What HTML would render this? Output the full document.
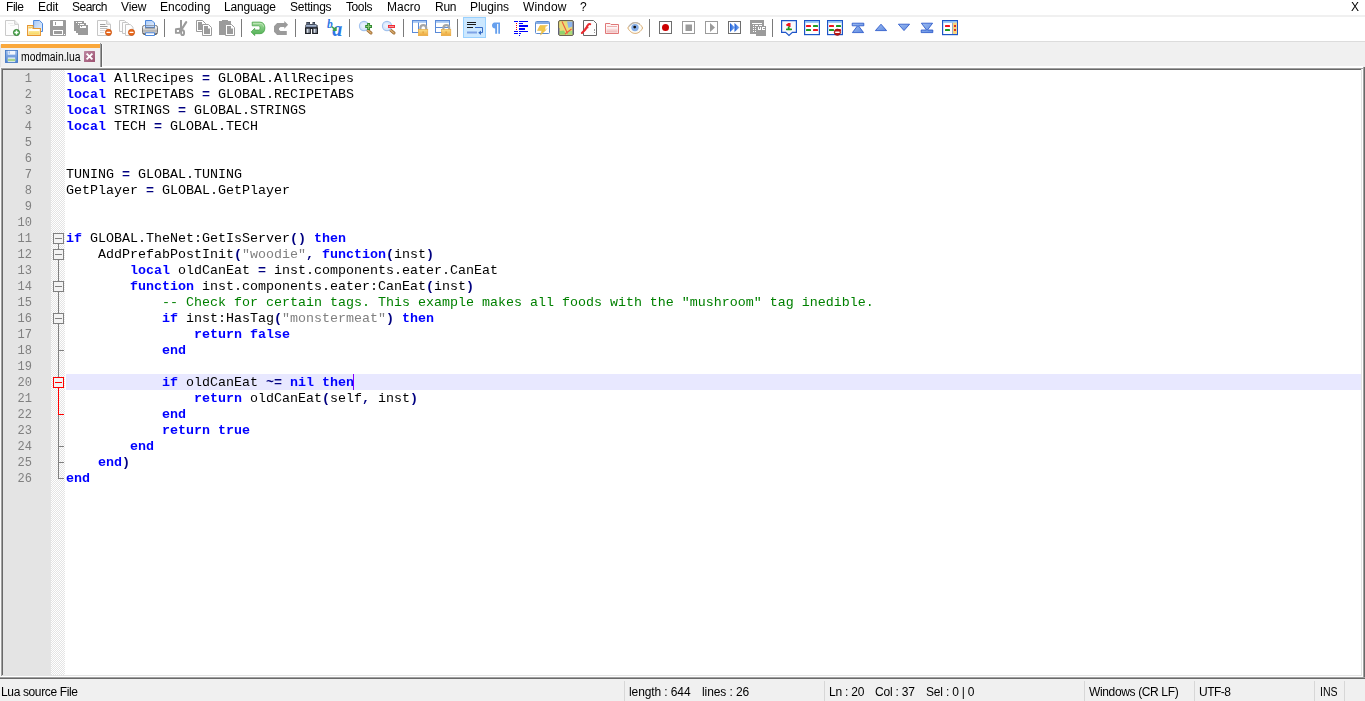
<!DOCTYPE html>
<html lang="en">
<head>
<meta charset="utf-8">
<title>modmain.lua - Notepad++</title>
<style>
*{box-sizing:border-box;margin:0;padding:0}
html,body{width:1365px;height:701px;overflow:hidden;background:#f0f0f0}
body{position:relative;font-family:"Liberation Sans",sans-serif;font-size:12px;color:#000}
.abs{position:absolute}
#menu{position:absolute;left:0;top:0;width:1365px;height:15px;background:#fff;will-change:transform}
#menu span{position:absolute;top:0;height:14px;line-height:14px;white-space:pre}
#mline{position:absolute;left:0;top:15px;width:1365px;height:2px;background:#f0f0f0}
#tb{position:absolute;left:0;top:17px;width:1365px;height:24px;background:#fff}
#tb .ic{position:absolute;top:3px;overflow:visible}
#tb .sep{position:absolute;top:2px;width:1px;height:18px;background:#7a7a7a}
#tb .act{position:absolute;top:0;width:23px;height:21px;background:#cce8ff;border:1px solid #99d1ff}
#tbline{position:absolute;left:0;top:41px;width:1365px;height:1px;background:#dcdcdc}
#tab{position:absolute;left:0;top:42px;width:103px;height:25px;will-change:transform}
#tab .lb{position:absolute;left:0;top:3px;width:1px;height:22px;background:#e4e4e4}
#tab .hi{position:absolute;left:0;top:0;width:100px;height:2px;background:#fff}
#tab .or{position:absolute;left:1px;top:2px;width:99px;height:4px;background:#faa83c}
#tab .rb{position:absolute;left:100px;top:1px;width:1px;height:24px;background:#a0a0a0}
#tab .rb2{position:absolute;left:101px;top:2px;width:1px;height:23px;background:#696969}
#tab .rb3{position:absolute;left:102px;top:2px;width:1px;height:22px;background:#fafafa}
#tabline{position:absolute;left:102px;top:66px;width:1261px;height:1px;background:#fff}
#tab .tx{position:absolute;left:21px;top:8px;font-size:12px;line-height:14px;white-space:pre;transform:scaleX(.865);transform-origin:0 0}
#tab .cl{position:absolute;left:84px;top:9px;width:11px;height:11px}
#tab .ti{position:absolute;left:5px;top:8px}
#ed{position:absolute;left:0;top:67px;width:1365px;height:612px;background:#fff}
#ed .b{position:absolute}
#num{position:absolute;left:3px;top:70px;width:48px;height:605px;background:#e4e4e4;overflow:hidden;padding-top:1px;
 font-family:"Liberation Mono",monospace;font-size:12px;line-height:16px;color:#808080;text-align:right;padding-right:19px;will-change:transform}
#fold{position:absolute;left:51px;top:70px;width:14px;height:605px;overflow:hidden;
 background-color:#fff;
 background-image:linear-gradient(45deg,#e4e4e4 25%,transparent 25%,transparent 75%,#e4e4e4 75%),linear-gradient(45deg,#e4e4e4 25%,transparent 25%,transparent 75%,#e4e4e4 75%);
 background-size:2px 2px;background-position:1px 0,0 1px}
#fold .foldsvg{position:absolute;left:0;top:0}
#code{position:absolute;left:64px;top:71px;width:1297px;height:604px;overflow:hidden;
 font-family:"Liberation Mono",monospace;font-size:13.333px;line-height:16px;color:#000;will-change:transform}
#code .ln{height:16px;padding-left:2px;margin-left:0;white-space:pre}
#hl{position:absolute;left:66px;top:374px;width:1295px;height:16px;background:#e8e8ff}
#code .k{color:#0000ff;font-weight:bold}
#code .o{color:#000080;font-weight:bold}
#code .s{color:#808080}
#code .c{color:#008000}
#caret{position:absolute;left:353px;top:374px;width:1px;height:16px;background:#8000ff}
#sb{position:absolute;left:0;top:679px;width:1365px;height:22px;background:#f0f0f0;will-change:transform}
#sb span{position:absolute;top:6px;height:14px;line-height:14px;white-space:pre}
#sb i{position:absolute;top:2px;width:1px;height:20px;background:#d7d7d7}
</style>
</head>
<body>
<svg width="0" height="0" style="position:absolute"><defs><linearGradient id="gBluePage" x1="0" y1="0" x2="1" y2="1"><stop offset="0" stop-color="#a9c9f6"/><stop offset="1" stop-color="#e6f0fd"/></linearGradient><linearGradient id="gFolder" x1="0" y1="0" x2="0" y2="1"><stop offset="0" stop-color="#fbe89a"/><stop offset="1" stop-color="#f8d65a"/></linearGradient><linearGradient id="gPrinter" x1="0" y1="0" x2="0" y2="1"><stop offset="0" stop-color="#fbfbfb"/><stop offset=".35" stop-color="#e4e4e4"/><stop offset=".6" stop-color="#b4b4b4"/><stop offset="1" stop-color="#d2d2d2"/></linearGradient><linearGradient id="gGreen" x1="0" y1="0" x2="0" y2="1"><stop offset="0" stop-color="#a6dba0"/><stop offset="1" stop-color="#4caf50"/></linearGradient><linearGradient id="gLock" x1="0" y1="0" x2="0" y2="1"><stop offset="0" stop-color="#fbe08a"/><stop offset="1" stop-color="#eda63a"/></linearGradient><linearGradient id="gPink" x1="0" y1="0" x2="0" y2="1"><stop offset="0" stop-color="#fbe6e6"/><stop offset="1" stop-color="#eeb4b4"/></linearGradient><linearGradient id="gBlueTri" x1="0" y1="0" x2="1" y2="0"><stop offset="0" stop-color="#1c5fd8"/><stop offset="1" stop-color="#8fb6f2"/></linearGradient><linearGradient id="gTabSave" x1="0" y1="0" x2="0" y2="1"><stop offset="0" stop-color="#9cbcec"/><stop offset="1" stop-color="#4d82d2"/></linearGradient><linearGradient id="gArrow" x1="0" y1="0" x2="1" y2="1"><stop offset="0" stop-color="#9dbcf0"/><stop offset="1" stop-color="#5f8ae0"/></linearGradient><linearGradient id="gClose" x1="0" y1="0" x2="1" y2="1"><stop offset="0" stop-color="#bd88a2"/><stop offset="1" stop-color="#9c506f"/></linearGradient></defs></svg>
<div id="menu">
<span style="left:6px;letter-spacing:-0.45px">File</span>
<span style="left:38px;letter-spacing:-0.1px">Edit</span>
<span style="left:72px;letter-spacing:-0.5px">Search</span>
<span style="left:121px;letter-spacing:-0.1px">View</span>
<span style="left:160px;letter-spacing:0.05px">Encoding</span>
<span style="left:224px;letter-spacing:-0.2px">Language</span>
<span style="left:290px;letter-spacing:-0.25px">Settings</span>
<span style="left:346px;letter-spacing:-0.4px">Tools</span>
<span style="left:387px;letter-spacing:0px">Macro</span>
<span style="left:435px;letter-spacing:-0.25px">Run</span>
<span style="left:470px;letter-spacing:-0.05px">Plugins</span>
<span style="left:523px;letter-spacing:0.15px">Window</span>
<span style="left:580px;letter-spacing:0px">?</span>
<span style="left:1351px;letter-spacing:0px">X</span>
</div>
<div id="mline"></div>
<div id="tb"><svg class="ic" style="left:4px" width="16" height="16" viewBox="0 0 16 16"><path d="M1.5 .5H10.7L14.5 4.3V15.5H1.5Z" fill="#fdfdfd" stroke="#cacaca"/><path d="M10.7 .5V4.3H14.5" fill="#efefef" stroke="#cacaca"/><path d="M4 3.5H9M6 5.5H11" stroke="#ededed"/><circle cx="12.5" cy="12.5" r="3.05" fill="#4caf50" stroke="#2c7a2c" stroke-width=".9"/><path d="M10.5 12.5H14.5M12.5 10.5V14.5" stroke="#fff" stroke-width="1.4"/></svg><svg class="ic" style="left:27px" width="16" height="16" viewBox="0 0 16 16"><path d="M6.6 .5H12.6L15.5 3.4V11.5H6.6Z" fill="url(#gBluePage)" stroke="#4d88dc"/><path d="M.6 5.5H6V8.5H13.4V15.4H.6Z" fill="#fffef6" stroke="#e6952e" stroke-width="1.1"/><path d="M1.4 6.4H5.6V7.6L4 8.6H1.4Z" fill="#f6cc5a"/><path d="M1.5 11H12.6V14.6H1.5Z" fill="url(#gFolder)"/></svg><svg class="ic" style="left:50px" width="16" height="16" viewBox="0 0 16 16"><rect x="0" y="0" width="16" height="16" rx=".8" fill="#9b9b9b"/><rect x="3" y="1" width="10" height="5" fill="#fff"/><rect x="5" y="2" width="1" height="3" fill="#9b9b9b"/><rect x="3" y="10" width="10" height="5" fill="#fff"/><rect x="4" y="11" width="8" height="3" fill="#9b9b9b"/><rect x="14" y="14" width="1" height="1" fill="#fff"/></svg><svg class="ic" style="left:73px" width="16" height="16" viewBox="0 0 16 16"><rect x="1" y="1" width="10" height="10" fill="#9b9b9b"/><rect x="3" y="2" width="6" height="2" fill="#fff"/><rect x="4" y="2" width="1" height="1" fill="#9b9b9b"/><rect x="3" y="3" width="10" height="1" fill="#fff" opacity=".0"/><rect x="3" y="3" width="10" height="10" fill="#9b9b9b"/><rect x="5" y="4" width="6" height="2" fill="#fff"/><rect x="6" y="4" width="1" height="1" fill="#9b9b9b"/><rect x="5" y="5" width="10" height="10" fill="#9b9b9b"/><rect x="7" y="6" width="6" height="2" fill="#fff"/><rect x="8" y="6" width="1" height="1" fill="#9b9b9b"/></svg><svg class="ic" style="left:96px" width="16" height="16" viewBox="0 0 16 16"><path d="M1.5 .5H10.7L14.5 4.3V15.5H1.5Z" fill="#fdfdfd" stroke="#c6c6c6"/><path d="M10.7 .5V4.3H14.5" fill="#f0f0f0" stroke="#c6c6c6"/><path d="M4 4.5H9.5M4 6.5H11.5" stroke="#9c9c9c"/><path d="M4 8.5H11.5" stroke="#bdbdbd"/><path d="M4 10.5H9M4 12.5H8" stroke="#d6d6d6"/><circle cx="12.5" cy="12.4" r="3.05" fill="#ea6a1e" stroke="#c8520e" stroke-width=".8"/><rect x="10.5" y="11.7" width="4" height="1.4" rx=".3" fill="#fff"/></svg><svg class="ic" style="left:119px" width="16" height="16" viewBox="0 0 16 16"><path d="M0.5 0.5H5.3L8 3.2V11.5H0.5Z" fill="#fdfdfd" stroke="#c6c6c6"/><path d="M3.5 2.5H8.3L11 5.2V13.5H3.5Z" fill="#fdfdfd" stroke="#c6c6c6"/><path d="M6.5 4.5H11.3L14 7.2V15.5H6.5Z" fill="#fdfdfd" stroke="#c6c6c6"/><circle cx="12.5" cy="12.4" r="3.05" fill="#ea6a1e" stroke="#c8520e" stroke-width=".8"/><rect x="10.5" y="11.7" width="4" height="1.4" rx=".3" fill="#fff"/></svg><svg class="ic" style="left:142px" width="16" height="16" viewBox="0 0 16 16"><path d="M3.5 .5H10L12.5 3V7H3.5Z" fill="url(#gBluePage)" stroke="#4d88dc"/><rect x=".5" y="5.5" width="15" height="8.6" rx="1.8" fill="url(#gPrinter)" stroke="#6e6e6e" stroke-width=".9"/><path d="M3.5 5.6V7.4H12.5V5.6" fill="url(#gBluePage)" stroke="#4d88dc"/><path d="M3 8H13" stroke="#6a6a6a" stroke-width=".9"/><path d="M1.2 13.6Q1.2 14.2 2.4 14.2H13.6Q14.8 14.2 14.8 13.6" stroke="#222" stroke-width="1" fill="none"/><path d="M3.5 12.8H12.5V15.5H3.5Z" fill="#fff" stroke="#4d88dc"/></svg><i class="sep" style="left:164px"></i><svg class="ic" style="left:173px" width="16" height="16" viewBox="0 0 16 16"><path d="M7 0H9V9.5H7Z" fill="#9b9b9b"/><path d="M13.2 2.2L8.2 10" stroke="#9b9b9b" stroke-width="2.2" fill="none" stroke-linecap="round"/><path d="M2.9 9.3L6.6 8.8L7.2 11.2L6.2 12.9H2.9Z" fill="none" stroke="#9b9b9b" stroke-width="1.9" stroke-linejoin="round"/><ellipse cx="9.6" cy="12.7" rx="1.5" ry="2.4" fill="none" stroke="#9b9b9b" stroke-width="1.9"/></svg><svg class="ic" style="left:196px" width="16" height="16" viewBox="0 0 16 16"><path d="M.5 .5H6.5L9.5 3.5V11.5H.5Z" fill="#fff" stroke="#9b9b9b"/><path d="M2 2H6V4.5H8V10H2Z" fill="#9b9b9b"/><path d="M6.5 4.5H12.5L15.5 7.5V15.5H6.5Z" fill="#fff" stroke="#9b9b9b"/><path d="M8 6H12V8.5H14V14H8Z" fill="#9b9b9b"/></svg><svg class="ic" style="left:219px" width="16" height="16" viewBox="0 0 16 16"><path d="M0 1H3V0H9V1H12V15H0Z" fill="#9b9b9b"/><path d="M6.5 4.5H12.5L15.5 7.5V15.5H6.5Z" fill="#fff" stroke="#9b9b9b"/><path d="M8 6H12V8.5H14V14H8Z" fill="#9b9b9b"/></svg><i class="sep" style="left:241px"></i><svg class="ic" style="left:250px" width="16" height="16" viewBox="0 0 16 16"><path d="M2.2 2.1H10C13.2 2.1 14.9 4.6 14.9 7.9C14.9 11.2 13.2 13.7 10 13.7H4.7V15.6L1.1 11.9L4.7 8.3V10H8.6C9.6 10 10 9 10 7.9C10 6.8 9.6 5.8 8.6 5.8H2.2Z" fill="url(#gGreen)" stroke="#3f9e3f" stroke-width=".7" stroke-linejoin="round"/><path d="M3 3.4H10C12 3.4 13.2 4.8 13.5 6.6" stroke="#c4e8bf" stroke-width="1" fill="none" opacity=".8"/></svg><svg class="ic" style="left:273px" width="16" height="16" viewBox="0 0 16 16"><path d="M11.3 1L15.1 4.8L11.3 8.8V7H7.5L6 8.2V9.8L7.5 11H13.8V14.9H4.1L1 11.8V6.2L4.1 3H11.3Z" fill="#9b9b9b"/></svg><i class="sep" style="left:295px"></i><svg class="ic" style="left:304px" width="16" height="16" viewBox="0 0 16 16"><path d="M2.4 2H6V4H8.6V2H11V4L13.6 5.2V7.4H14V14H8.1V9H6.9V14H1V7.4H1.4V5.2L2.4 4Z" fill="#1d2026"/><path d="M2.8 2.6H5.6V4.2H2.8ZM8.9 2.6H10.7V4.2H8.9Z" fill="#5c6a82"/><rect x="2" y="4.6" width="10.6" height="2.6" fill="#7e8eaa"/><path d="M2.4 5.6H12.2" stroke="#aebcd4" stroke-width=".9"/><rect x="2.2" y="8.6" width="3.6" height="4.2" fill="#8f98a6"/><rect x="9.2" y="8.6" width="3.6" height="4.2" fill="#8f98a6"/><path d="M3.6 9V12.8M10.6 9V12.8" stroke="#dfe3ea" stroke-width="1"/></svg><svg class="ic" style="left:327px" width="16" height="16" viewBox="0 0 16 16"><text x="0" y="7.9" font-family="Liberation Serif,serif" font-style="italic" font-weight="bold" font-size="11.5" fill="#2e78e4">b</text><text x="5.2" y="15.8" font-family="Liberation Serif,serif" font-style="italic" font-weight="bold" font-size="20" fill="#2e78e4">a</text><path d="M4.6 6.6L8.4 9.6M9 7V10.3H5.8" stroke="#3da24a" stroke-width="1.4" fill="none"/></svg><i class="sep" style="left:349px"></i><svg class="ic" style="left:358px" width="16" height="16" viewBox="0 0 16 16"><path d="M9.6 10.2L13 13" stroke="#9c6a30" stroke-width="3" stroke-linecap="round"/><path d="M9.6 10.2L13 13" stroke="#d8aa6c" stroke-width="1.5" stroke-linecap="round"/><circle cx="6" cy="6" r="4.6" fill="#d9e7fb" stroke="#a3c3ee" stroke-width="1.1"/><circle cx="5.6" cy="5.6" r="2.4" fill="#e8f1fd"/><path d="M7.2 6.5H14M10.6 3.1V9.9" stroke="#2f8a2f" stroke-width="2.9"/><path d="M8.1 6.5H13.1M10.6 4V9" stroke="#8cc878" stroke-width="1.1"/></svg><svg class="ic" style="left:381px" width="16" height="16" viewBox="0 0 16 16"><path d="M9.6 10.2L13 13" stroke="#9c6a30" stroke-width="3" stroke-linecap="round"/><path d="M9.6 10.2L13 13" stroke="#d8aa6c" stroke-width="1.5" stroke-linecap="round"/><circle cx="6" cy="6" r="4.6" fill="#d9e7fb" stroke="#a3c3ee" stroke-width="1.1"/><circle cx="5.6" cy="5.6" r="2.4" fill="#e8f1fd"/><rect x="7" y="5" width="7" height="2.9" fill="#f0202a"/><rect x="7.8" y="5.9" width="5.4" height="1" fill="#f7a0a0"/></svg><i class="sep" style="left:403px"></i><svg class="ic" style="left:412px" width="16" height="16" viewBox="0 0 16 16"><rect x=".5" y=".5" width="14" height="12" fill="#fff" stroke="#5a8ad8"/><rect x="1" y="1" width="13" height="1.8" fill="#a6c6f2"/><path d="M6.5 2.5V12.5" stroke="#5a8ad8"/><path d="M8.4 10V8A2.9 2.9 0 0 1 14.2 8V10" fill="none" stroke="#a6a6a6" stroke-width="2.2"/><rect x="6.3" y="9.3" width="9.5" height="6.4" fill="url(#gLock)" stroke="#e6a53a" stroke-width=".6"/><rect x="10.6" y="11.4" width="1" height="2" fill="#dc9a30"/></svg><svg class="ic" style="left:435px" width="16" height="16" viewBox="0 0 16 16"><rect x=".5" y=".5" width="14" height="12" fill="#fff" stroke="#5a8ad8"/><rect x="1" y="1" width="13" height="1.8" fill="#a6c6f2"/><path d="M.5 7.5H14.5" stroke="#5a8ad8"/><path d="M8.4 10V8A2.9 2.9 0 0 1 14.2 8V10" fill="none" stroke="#a6a6a6" stroke-width="2.2"/><rect x="6.3" y="9.3" width="9.5" height="6.4" fill="url(#gLock)" stroke="#e6a53a" stroke-width=".6"/><rect x="10.6" y="11.4" width="1" height="2" fill="#dc9a30"/></svg><i class="sep" style="left:457px"></i><i class="act" style="left:463px"></i><svg class="ic" style="left:466px" width="16" height="16" viewBox="0 0 16 16"><path d="M1 2.5H10M1 4.5H10" stroke="#1a1a1a" stroke-width="1"/><path d="M1 7.5H7" stroke="#1a1a1a" stroke-width="1"/><path d="M9 7.5H16.5V12.6H14.5" stroke="#3569c4" stroke-width="1" fill="none"/><path d="M15 10.4V15L12.2 12.7Z" fill="#3569c4"/><rect x="1" y="11.5" width="10" height="2" fill="#7ea3e6"/></svg><svg class="ic" style="left:489px" width="16" height="16" viewBox="0 0 16 16"><path d="M5.4 2.4H11V13.8H9.3V4H8.1V13.8H6.2V8.6C4.4 8.6 3 7.3 3 5.5C3 3.7 4.2 2.4 5.4 2.4Z" fill="#66a0ee"/></svg><svg class="ic" style="left:512px" width="16" height="16" viewBox="0 0 16 16"><g shape-rendering="crispEdges" transform="translate(1 0)"><path d="M1 1.5H5M6 1.5H15M6 3.5H10M1 11.5H5M6 11.5H15M1 13.5H5M6 13.5H8" stroke="#0000ff" stroke-width="1"/><rect x="6" y="5" width="9" height="2" fill="#0000ff"/><rect x="6" y="8" width="6" height="2" fill="#0000ff"/><rect x="6" y="15" width="1" height="1" fill="#0000ff"/><rect x="3" y="3" width="1" height="1" fill="#ff0000"/><rect x="3" y="5" width="1" height="1" fill="#ff0000"/><rect x="3" y="7" width="1" height="1" fill="#ff0000"/><rect x="3" y="9" width="1" height="1" fill="#ff0000"/></g></svg><svg class="ic" style="left:535px" width="16" height="16" viewBox="0 0 16 16"><rect x=".5" y="1.5" width="14" height="12" rx="1" fill="#fff" stroke="#5b8ad0"/><rect x="1" y="2" width="13" height="2" fill="#86aee6"/><path d="M5 5.5H12.5L9.5 8.5H12.5L5.5 15L7 10.5H2.5Z" fill="#f0c64a" stroke="#e2b23a" stroke-width=".5"/><path d="M10.5 6.5L13.5 5.5V10L10 9.5Z" fill="#fff" opacity=".7"/></svg><svg class="ic" style="left:558px" width="16" height="16" viewBox="0 0 16 16"><rect x=".6" y=".6" width="14.8" height="14.8" rx="1.4" fill="#e8dc78" stroke="#5a5646" stroke-width="1"/><path d="M9 1.5H14.5V6.5L10.5 8Z" fill="#8db4ec"/><path d="M1.5 11L6 10.5L8 14.5H1.5Z" fill="#8fd26f"/><path d="M10 11H14.5V14.5H9Z" fill="#a6dc7c"/><path d="M4 1.5L9.5 13.5M13.5 9L7 14" stroke="#f05a3c" stroke-width="1.1" fill="none"/><path d="M15 1.5V14.5M.9 8V14.5" stroke="#5a5f9a" stroke-width=".9"/></svg><svg class="ic" style="left:581px" width="16" height="16" viewBox="0 0 16 16"><path d="M2.5 .5H12.5L15.5 3.5V15.5H2.5Z" fill="#fefefe" stroke="#666" stroke-width="1"/><path d="M13.5 9V13" stroke="#999" stroke-width="1" stroke-dasharray="2 1"/><path d="M.9 13L4.4 9.6L6.6 5.6C7.2 4.4 8.2 3.8 9.2 4.2" stroke="#ea2a2e" stroke-width="2.1" fill="none" stroke-linecap="round" stroke-linejoin="round"/><path d="M3.6 8.6L7.4 7.4" stroke="#ea2a2e" stroke-width="1.5"/></svg><svg class="ic" style="left:604px" width="16" height="16" viewBox="0 0 16 16"><path d="M1.5 3.5H6L7 4.5H14.5V13.5H1.5Z" fill="#fdf4f4" stroke="#e07878"/><path d="M2.5 8.5H13.5V12.5H2.5Z" fill="url(#gPink)"/><path d="M3 6.5H13" stroke="#eeb0b0"/></svg><svg class="ic" style="left:627px" width="16" height="16" viewBox="0 0 16 16"><path d="M.8 8C3 3.6 6 2.6 8.2 2.6C10.6 2.6 13.6 3.8 15.6 8C13.6 12 10.8 13.4 8.2 13.4C5.8 13.4 3 12.2.8 8Z" fill="#fbfbf6" stroke="#d9a86a" stroke-width="1"/><path d="M2 6.5C4 3.6 6.4 2.6 8.4 2.6C10 2.6 11.6 3.2 12.8 4.2" stroke="#b4b4b4" stroke-width="1.2" fill="none"/><circle cx="8" cy="7.6" r="3.7" fill="#86aee8"/><circle cx="7.7" cy="7.1" r="1.4" fill="#111"/></svg><i class="sep" style="left:649px"></i><svg class="ic" style="left:658px" width="16" height="16" viewBox="0 0 16 16"><rect x="1.5" y="1.5" width="12" height="12" fill="#fff" stroke="#6e6e6e" stroke-width="1"/><circle cx="7.5" cy="7.5" r="3.5" fill="#cc0000"/></svg><svg class="ic" style="left:681px" width="16" height="16" viewBox="0 0 16 16"><rect x="1.5" y="1.5" width="12" height="12" fill="#fff" stroke="#9b9b9b" stroke-width="1"/><rect x="4.5" y="4.5" width="6.5" height="6.5" fill="#9b9b9b"/></svg><svg class="ic" style="left:704px" width="16" height="16" viewBox="0 0 16 16"><rect x="1.5" y="1.5" width="12" height="12" fill="#fff" stroke="#9b9b9b" stroke-width="1"/><path d="M6 3L11 7.5L6 12Z" fill="#9b9b9b"/></svg><svg class="ic" style="left:727px" width="16" height="16" viewBox="0 0 16 16"><rect x="1.5" y="1.5" width="12" height="12" fill="#fff" stroke="#6e6e6e" stroke-width="1"/><path d="M3 3L8 7.5L3 12Z" fill="url(#gBlueTri)"/><path d="M7.5 3L12.5 7.5L7.5 12Z" fill="url(#gBlueTri)"/></svg><svg class="ic" style="left:750px" width="16" height="16" viewBox="0 0 16 16"><g shape-rendering="crispEdges"><rect x="0" y="0" width="14" height="14" fill="#9b9b9b"/><rect x="6" y="6" width="10" height="10" fill="#9b9b9b"/><rect x="2" y="3" width="10" height="1" fill="#fff"/><rect x="3" y="5" width="1" height="1" fill="#fff"/><rect x="5" y="5" width="3" height="1" fill="#fff"/><rect x="9" y="5" width="3" height="1" fill="#fff"/><rect x="3" y="7" width="1" height="1" fill="#fff"/><rect x="5" y="7" width="1" height="1" fill="#fff"/><rect x="3" y="9" width="1" height="1" fill="#fff"/><rect x="5" y="9" width="1" height="1" fill="#fff"/><rect x="3" y="11" width="1" height="1" fill="#fff"/><rect x="5" y="11" width="1" height="1" fill="#fff"/><rect x="8" y="7" width="3" height="3" fill="#fff"/><rect x="9" y="7" width="1" height="2" fill="#9b9b9b"/><rect x="12" y="7" width="2.6" height="3" fill="#fff"/><rect x="13" y="8" width="1.6" height="1" fill="#9b9b9b"/></g></svg><i class="sep" style="left:772px"></i><svg class="ic" style="left:781px" width="16" height="16" viewBox="0 0 16 16"><path d="M.6 .6H15.4V12.4H11.4L8 15.4L4.6 12.4H.6Z" fill="#f8f9fd" stroke="#1d55c8" stroke-width="1.2"/><path d="M5.4 5.6L7.6 4H8.6V7" stroke="#f0141e" stroke-width="1.8" fill="none"/><path d="M7.7 6.4V9" stroke="#1f9a1f" stroke-width="1.8"/><rect x="5" y="8.4" width="6" height="1.8" rx=".6" fill="#1f9a1f"/></svg><svg class="ic" style="left:804px" width="16" height="16" viewBox="0 0 16 16"><rect x=".6" y=".6" width="14.8" height="14" fill="#fff" stroke="#1d55c8" stroke-width="1.2"/><rect x="1.2" y="1.2" width="13.6" height="1.5" fill="#7db8f4"/><rect x="2" y="5" width="5" height="2" rx=".6" fill="#f0141e"/><rect x="9" y="5" width="5" height="2" rx=".6" fill="#1f9a1f"/><rect x="2" y="9" width="5" height="2" rx=".6" fill="#1f9a1f"/><rect x="9" y="9" width="5" height="2" rx=".6" fill="#f0141e"/></svg><svg class="ic" style="left:827px" width="16" height="16" viewBox="0 0 16 16"><rect x=".6" y=".6" width="14.8" height="14" fill="#fff" stroke="#1d55c8" stroke-width="1.2"/><rect x="1.2" y="1.2" width="13.6" height="1.5" fill="#7db8f4"/><rect x="2" y="5" width="5" height="2" rx=".6" fill="#f0141e"/><rect x="9" y="5" width="5" height="2" rx=".6" fill="#1f9a1f"/><rect x="2" y="9" width="5" height="2" rx=".6" fill="#1f9a1f"/><rect x="9" y="9" width="5" height="2" rx=".6" fill="#f0141e"/><circle cx="10.4" cy="12.2" r="3.2" fill="#b81414" stroke="#8e0c0c" stroke-width=".6"/><rect x="8.1" y="11.5" width="4.6" height="1.5" rx=".4" fill="#fff"/></svg><svg class="ic" style="left:850px" width="16" height="16" viewBox="0 0 16 16"><path d="M2.2 3.2H13.8V5.8H8.5L13.6 12.6H2.4L7.5 5.8H2.2Z" fill="url(#gArrow)" stroke="#1f4fc6" stroke-width=".8" stroke-linejoin="round"/></svg><svg class="ic" style="left:873px" width="16" height="16" viewBox="0 0 16 16"><path d="M8 4.2L13.6 10.6H2.4Z" fill="url(#gArrow)" stroke="#1f4fc6" stroke-width=".8" stroke-linejoin="round"/></svg><svg class="ic" style="left:896px" width="16" height="16" viewBox="0 0 16 16"><path d="M2.4 4.2H13.6L8 10.6Z" fill="url(#gArrow)" stroke="#1f4fc6" stroke-width=".8" stroke-linejoin="round"/></svg><svg class="ic" style="left:919px" width="16" height="16" viewBox="0 0 16 16"><path d="M2.4 3.2H13.6L8.5 10H13.8V12.6H2.2V10H7.5Z" fill="url(#gArrow)" stroke="#1f4fc6" stroke-width=".8" stroke-linejoin="round"/></svg><svg class="ic" style="left:942px" width="16" height="16" viewBox="0 0 16 16"><rect x=".6" y=".6" width="14.8" height="14" fill="#fff" stroke="#1d55c8" stroke-width="1.2"/><rect x="1.2" y="1.2" width="13.6" height="1.5" fill="#7db8f4"/><rect x="10.5" y="2.7" width="4.3" height="11.3" fill="#fbd57a"/><path d="M10.5 2.7V14" stroke="#7a9ad6" stroke-width=".8"/><rect x="3" y="5" width="5" height="2" rx=".6" fill="#f0141e"/><rect x="3" y="9" width="5" height="2" rx=".6" fill="#1f9a1f"/><rect x="12" y="5" width="2" height="2" fill="#e0301e"/><rect x="12" y="9" width="2" height="2" fill="#e0301e"/></svg></div>
<div id="tbline"></div>
<div id="tab">
<div class="lb"></div><div class="hi"></div><div class="or"></div><div class="rb"></div><div class="rb2"></div><div class="rb3"></div>
<svg class="ti" width="13" height="13" viewBox="0 0 14 14"><rect x=".5" y=".5" width="13" height="13" fill="url(#gTabSave)" stroke="#4a7cc6"/><rect x="3" y="1" width="8" height="4" fill="#f3f7fd"/><rect x="4" y="1.5" width="1" height="2.5" fill="#7fa6e0"/><rect x="3" y="8" width="8" height="5" fill="#dfeaf8"/><rect x="3" y="9.5" width="8" height="2.5" fill="#a9d58c"/></svg>
<span class="tx">modmain.lua</span>
<svg class="cl" viewBox="0 0 11 11"><rect width="11" height="11" rx=".6" fill="url(#gClose)"/><path d="M2.6 2.6 L8.4 8.4 M8.4 2.6 L2.6 8.4" stroke="#fff" stroke-width="1.9"/></svg>
</div>
<div id="tabline"></div>
<div id="ed">
<div class="b" style="left:0;top:0;width:1363px;height:1px;background:#fff"></div>
<div class="b" style="left:0;top:0;width:100px;height:1px;background:#f4f4f4"></div>
<div class="b" style="left:1px;top:1px;width:1362px;height:1px;background:#a0a0a0"></div>
<div class="b" style="left:2px;top:2px;width:1360px;height:1px;background:#696969"></div>
<div class="b" style="left:0;top:1px;width:1px;height:609px;background:#f8f8f8"></div>
<div class="b" style="left:1px;top:1px;width:1px;height:608px;background:#a0a0a0"></div>
<div class="b" style="left:2px;top:2px;width:1px;height:606px;background:#696969"></div>
<div class="b" style="left:1361px;top:2px;width:1px;height:607px;background:#e3e3e3"></div>
<div class="b" style="left:2px;top:608px;width:1360px;height:1px;background:#e3e3e3"></div>
<div class="b" style="left:1363px;top:0;width:1px;height:612px;background:#a0a0a0"></div>
<div class="b" style="left:1364px;top:0;width:1px;height:612px;background:#696969"></div>
<div class="b" style="left:0;top:610px;width:1365px;height:1px;background:#a0a0a0"></div>
<div class="b" style="left:0;top:611px;width:1365px;height:1px;background:#696969"></div>
</div>
<div id="num"><div>1</div><div>2</div><div>3</div><div>4</div><div>5</div><div>6</div><div>7</div><div>8</div><div>9</div><div>10</div><div>11</div><div>12</div><div>13</div><div>14</div><div>15</div><div>16</div><div>17</div><div>18</div><div>19</div><div>20</div><div>21</div><div>22</div><div>23</div><div>24</div><div>25</div><div>26</div></div>
<div id="fold"><svg class="foldsvg" width="14" height="605" viewBox="0 0 14 605" shape-rendering="crispEdges"><rect x="7" y="174" width="1" height="5" fill="#808080"/><rect x="7" y="190" width="1" height="21" fill="#808080"/><rect x="7" y="222" width="1" height="21" fill="#808080"/><rect x="7" y="254" width="1" height="53" fill="#808080"/><rect x="7" y="318" width="1" height="27" fill="#ff0000"/><rect x="7" y="345" width="1" height="64" fill="#808080"/><rect x="7" y="280" width="6" height="1" fill="#808080"/><rect x="7" y="376" width="6" height="1" fill="#808080"/><rect x="7" y="392" width="6" height="1" fill="#808080"/><rect x="7" y="408" width="6" height="1" fill="#808080"/><rect x="7" y="344" width="6" height="1" fill="#ff0000"/><rect x="2.5" y="163.5" width="10" height="10" fill="#f3f3f3" stroke="#808080"/><rect x="4" y="168" width="7" height="1" fill="#808080"/><rect x="2.5" y="179.5" width="10" height="10" fill="#f3f3f3" stroke="#808080"/><rect x="4" y="184" width="7" height="1" fill="#808080"/><rect x="2.5" y="211.5" width="10" height="10" fill="#f3f3f3" stroke="#808080"/><rect x="4" y="216" width="7" height="1" fill="#808080"/><rect x="2.5" y="243.5" width="10" height="10" fill="#f3f3f3" stroke="#808080"/><rect x="4" y="248" width="7" height="1" fill="#808080"/><rect x="2.5" y="307.5" width="10" height="10" fill="#f3f3f3" stroke="#ff0000"/><rect x="4" y="312" width="7" height="1" fill="#ff0000"/></svg></div>
<div id="hl"></div>
<div id="code"><div class="ln"><span class="k">local</span> AllRecipes <span class="o">=</span> GLOBAL.AllRecipes</div>
<div class="ln"><span class="k">local</span> RECIPETABS <span class="o">=</span> GLOBAL.RECIPETABS</div>
<div class="ln"><span class="k">local</span> STRINGS <span class="o">=</span> GLOBAL.STRINGS</div>
<div class="ln"><span class="k">local</span> TECH <span class="o">=</span> GLOBAL.TECH</div>
<div class="ln"></div>
<div class="ln"></div>
<div class="ln">TUNING <span class="o">=</span> GLOBAL.TUNING</div>
<div class="ln">GetPlayer <span class="o">=</span> GLOBAL.GetPlayer</div>
<div class="ln"></div>
<div class="ln"></div>
<div class="ln"><span class="k">if</span> GLOBAL.TheNet:GetIsServer<span class="o">()</span> <span class="k">then</span></div>
<div class="ln">    AddPrefabPostInit<span class="o">(</span><span class="s">"woodie"</span><span class="o">,</span> <span class="k">function</span><span class="o">(</span>inst<span class="o">)</span></div>
<div class="ln">        <span class="k">local</span> oldCanEat <span class="o">=</span> inst.components.eater.CanEat</div>
<div class="ln">        <span class="k">function</span> inst.components.eater:CanEat<span class="o">(</span>inst<span class="o">)</span></div>
<div class="ln">            <span class="c">-- Check for certain tags. This example makes all foods with the "mushroom" tag inedible.</span></div>
<div class="ln">            <span class="k">if</span> inst:HasTag<span class="o">(</span><span class="s">"monstermeat"</span><span class="o">)</span> <span class="k">then</span></div>
<div class="ln">                <span class="k">return</span> <span class="k">false</span></div>
<div class="ln">            <span class="k">end</span></div>
<div class="ln"></div>
<div class="ln">            <span class="k">if</span> oldCanEat <span class="o">~=</span> <span class="k">nil</span> <span class="k">then</span></div>
<div class="ln">                <span class="k">return</span> oldCanEat<span class="o">(</span>self<span class="o">,</span> inst<span class="o">)</span></div>
<div class="ln">            <span class="k">end</span></div>
<div class="ln">            <span class="k">return</span> <span class="k">true</span></div>
<div class="ln">        <span class="k">end</span></div>
<div class="ln">    <span class="k">end</span><span class="o">)</span></div>
<div class="ln"><span class="k">end</span></div></div>
<div id="caret"></div>
<div id="sb">
<span style="left:1px;letter-spacing:-.36px">Lua source File</span>
<i style="left:624px"></i>
<span style="left:629px;letter-spacing:-.1px">length : 644</span>
<span style="left:702px;letter-spacing:-.1px">lines : 26</span>
<i style="left:824px"></i>
<span style="left:829px;letter-spacing:-.2px">Ln : 20</span>
<span style="left:875px;letter-spacing:-.2px">Col : 37</span>
<span style="left:926px;letter-spacing:-.2px">Sel : 0 | 0</span>
<i style="left:1084px"></i>
<span style="left:1089px;letter-spacing:-.36px">Windows (CR LF)</span>
<i style="left:1194px"></i>
<span style="left:1199px;letter-spacing:-.5px">UTF-8</span>
<i style="left:1314px"></i>
<span style="left:1320px;transform:scaleX(.88);transform-origin:0 0">INS</span>
<i style="left:1344px"></i>
</div>
</body>
</html>
